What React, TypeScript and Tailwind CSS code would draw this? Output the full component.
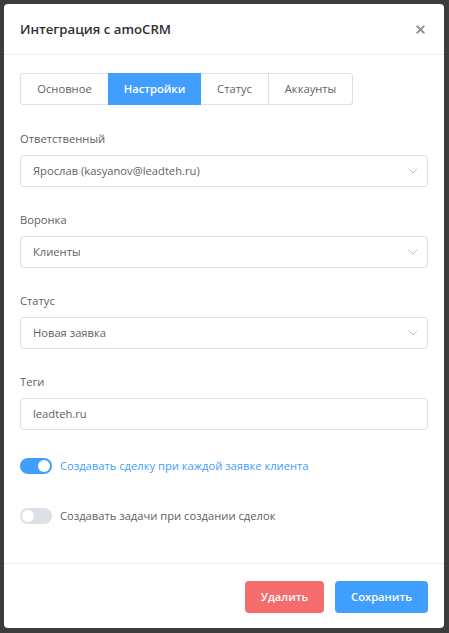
import { X } from "lucide-react";

const fields = [
  { label: "Ответственный", value: "Ярослав (kasyanov@leadteh.ru)", select: true },
  { label: "Воронка", value: "Клиенты", select: true },
  { label: "Статус", value: "Новая заявка", select: true },
  { label: "Теги", value: "leadteh.ru", select: false },
];

const tabs = [
  { name: "Основное", w: "w-[89px]", active: false },
  { name: "Настройки", w: "w-[93px]", active: true },
  { name: "Статус", w: "w-[69px]", active: false },
  { name: "Аккаунты", w: "w-[85px]", active: false },
];

function Chevron() {
  return (
    <svg width="10" height="6" viewBox="0 0 10 6" fill="none">
      <path d="M1 1l4 4 4-4" stroke="#c0c4cc" strokeWidth="1" strokeLinecap="round" strokeLinejoin="round" />
    </svg>
  );
}

function Toggle({ on }: { on: boolean }) {
  return (
    <div
      className={`w-8 h-4 rounded-full p-[2px] flex items-center shrink-0 ${
        on ? "bg-[#409eff] justify-end" : "bg-[#dcdfe6] justify-start"
      }`}
    >
      <div className="w-3 h-3 rounded-full bg-white" />
    </div>
  );
}

export default function App() {
  return (
    <div
      className="h-[633px] w-[449px] bg-[#3c3c3c] p-[4px] pr-[5px] pb-[5px]"
      style={{ fontFamily: '"Open Sans", "Noto Sans", sans-serif' }}
    >
      <div className="bg-white rounded-[4px] h-full flex flex-col">
        <div className="h-[51px] px-4 flex items-center justify-between border-b border-[#ebeef5]">
          <h1 className="text-[13.2px] font-semibold text-[#303133] pt-[1px]">Интеграция с amoCRM</h1>
          <X className="w-[13px] h-[13px] text-[#909399] mr-[1px]" strokeWidth={3.5} />
        </div>

        <div className="flex-1 px-4 pt-[18px]">
          <div className="flex">
            {tabs.map((t, i) => (
              <div
                key={t.name}
                className={`${t.w} h-8 flex items-center justify-center text-[11.2px] border ${
                  i > 0 ? "-ml-px" : ""
                } ${i === 0 ? "rounded-l-[3px]" : ""} ${i === tabs.length - 1 ? "rounded-r-[3px]" : ""} ${
                  t.active
                    ? "bg-[#409eff] border-[#409eff] text-white font-semibold relative"
                    : "bg-white border-[#dcdfe6] text-[#606266]"
                }`}
              >
                {t.name}
              </div>
            ))}
          </div>

          <div className="flex flex-col gap-[25px] mt-[26px]">
            {fields.map((f) => (
              <div key={f.label}>
                <div className="h-4 leading-4 text-[11.2px] text-[#606266]">{f.label}</div>
                <div className="mt-2 h-8 border border-[#dcdfe6] rounded-[4px] pl-3 pr-[9px] flex items-center justify-between text-[11.2px] text-[#606266]">
                  <span>{f.value}</span>
                  {f.select && <Chevron />}
                </div>
              </div>
            ))}
          </div>

          <div className="mt-[28px] flex items-center gap-2 h-4">
            <Toggle on />
            <span className="text-[11.2px] text-[#409eff]">Создавать сделку при каждой заявке клиента</span>
          </div>
          <div className="mt-[34px] flex items-center gap-2 h-4">
            <Toggle on={false} />
            <span className="text-[11.2px] text-[#606266]">Создавать задачи при создании сделок</span>
          </div>
        </div>

        <div className="border-t border-[#ebeef5] px-4 pt-[17px] pb-[15px] flex justify-end gap-[11px]">
          <button className="w-[79px] h-8 rounded-[4px] bg-[#f56c6c] text-white text-[11.2px] font-semibold">
            Удалить
          </button>
          <button className="w-[93px] h-8 rounded-[4px] bg-[#409eff] text-white text-[11.2px] font-semibold">
            Сохранить
          </button>
        </div>
      </div>
    </div>
  );
}
